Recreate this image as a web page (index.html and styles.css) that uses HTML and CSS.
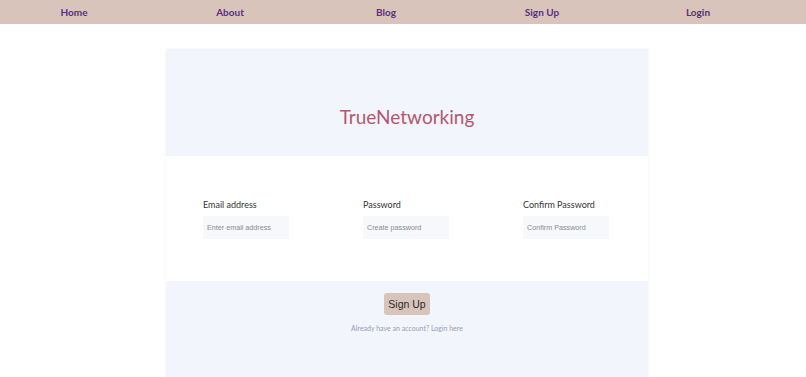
FILE: index.html
```html
<!DOCTYPE html>
<html lang="en">
<head>
  <meta charset="UTF-8" />
  <meta name="viewport" content="width=device-width, initial-scale=1" />
  <title>TrueNetworking - Sign Up</title>
  <link rel="stylesheet" href="styles.css">
</head>
<body>
  <nav class="topnav">
    <a href="#">Home</a>
    <a href="#">About</a>
    <a href="#">Blog</a>
    <a href="#">Sign Up</a>
    <a href="#">Login</a>
  </nav>
  <main class="card">
    <section class="card-head">
      <h1>TrueNetworking</h1>
    </section>
    <form class="card-body">
      <div class="field">
        <label for="email">Email address</label>
        <input type="email" id="email" placeholder="Enter email address">
      </div>
      <div class="field">
        <label for="password">Password</label>
        <input type="password" id="password" placeholder="Create password">
      </div>
      <div class="field">
        <label for="confirm">Confirm Password</label>
        <input type="password" id="confirm" placeholder="Confirm Password">
      </div>
    </form>
    <section class="card-foot">
      <button type="button">Sign Up</button>
      <p>Already have an account? <a href="#">Login here</a></p>
    </section>
  </main>
</body>
</html>
```

FILE: styles.css
```css
body {
  margin: 0;
  font-family: Lato, "Open Sans", sans-serif;
  background: #ffffff;
  color: #222;
  overflow: hidden;
}
.topnav {
  background-color: #d8c4bb;
  height: 24px;
  display: flex;
  align-items: center;
  gap: 8px;
}
.topnav a {
  width: 148px;
  text-align: center;
  color: #5b2c86;
  font-weight: 700;
  font-size: 10px;
  text-decoration: none;
}
.card {
  width: 482px;
  margin: 25px 0 0 166px;
  box-shadow: 0 0 2px rgba(0,0,0,0.08);
}
.card-head {
  background-color: #f2f6fc;
  height: 107px;
  display: flex;
  align-items: center;
  justify-content: center;
}
.card-head h1 {
  margin: 28px 0 0;
  font-weight: 400;
  font-size: 19px;
  color: #b5566e;
}
.card-body {
  background: #ffffff;
  height: 125px;
  box-sizing: border-box;
  padding: 43px 0 0 37px;
  margin: 0;
  display: grid;
  grid-template-columns: 160px 160px 1fr;
  align-content: start;
}
.field label {
  display: block;
  font-size: 9px;
  color: #333;
  margin-bottom: 4px;
}
.field input {
  width: 86px;
  height: 23px;
  box-sizing: border-box;
  border: none;
  background: #f7f8fc;
  padding: 0 4px;
  font-family: "Liberation Sans", Arial, sans-serif;
  font-size: 7.2px;
  outline: none;
}
.field input::placeholder {
  color: #8a8a8a;
}
.card-foot {
  background-color: #f2f6fc;
  height: 110px;
  padding-top: 11px;
  box-sizing: border-box;
  text-align: center;
}
.card-foot button {
  background-color: #d8c4bb;
  border: none;
  border-radius: 3px;
  width: 46px;
  height: 22px;
  padding: 0;
  font-family: "Liberation Sans", Arial, sans-serif;
  font-size: 10.5px;
  color: #2a2a2a;
  cursor: pointer;
}
.card-foot p {
  margin: 9px 0 0;
  font-size: 7px;
  color: #9a9aae;
}
.card-foot a {
  color: #9a9aae;
  text-decoration: none;
}
```
